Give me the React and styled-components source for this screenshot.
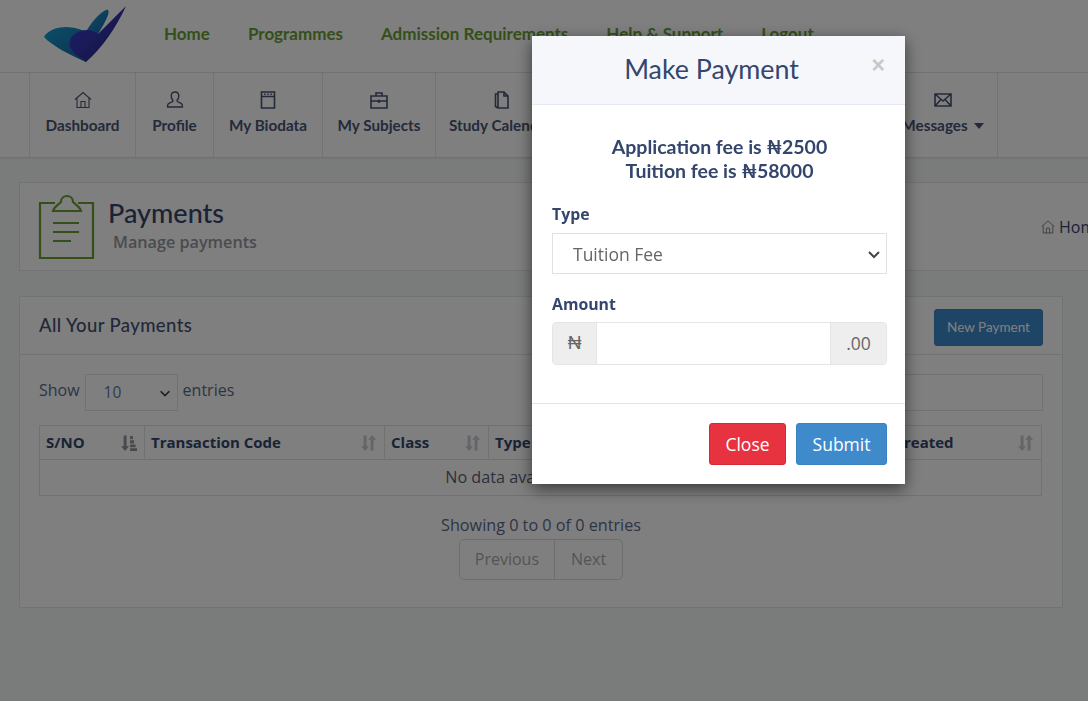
import styled, { createGlobalStyle } from "styled-components"

const heading = `"Lato", "Liberation Sans", sans-serif`
const bodyFont = `"Open Sans", "Noto Sans", "DejaVu Sans", sans-serif`

const GlobalStyle = createGlobalStyle`
  html, body {
    margin: 0;
    height: 100%;
    overflow: hidden;
  }
  body {
    background: #f4f9f7;
    font-family: ${bodyFont};
    font-size: 16px;
    color: #34466d;
  }
  * { box-sizing: border-box; }
`

const TopBar = styled.header`
  display: flex;
  align-items: center;
  height: 73px;
  padding: 0 0 5px 43px;
  background: #fff;
  border-bottom: 1px solid #e6e6ee;
`
const Logo = styled.svg`
  width: 85px;
  height: 58px;
  margin-right: 36px;
  flex-shrink: 0;
`
const TopLinks = styled.nav`
  display: flex;
  gap: 38px;
  white-space: nowrap;
`
const TopLink = styled.a`
  font-family: ${heading};
  font-weight: 700;
  font-size: 17px;
  color: #6a9e36;
`
const MenuBar = styled.nav`
  display: flex;
  height: 84px;
  padding-left: 29px;
  background: #fff;
  box-shadow: 0 1px 2px rgba(0, 0, 0, 0.12);
`
const MenuItem = styled.a`
  display: flex;
  flex-direction: column;
  align-items: center;
  flex: 0 0 ${p => p.$width}px;
  padding-top: 17px;
  border-left: 1px solid #e6e6ee;
  border-right: ${p => (p.$last ? "1px solid #e6e6ee" : "0")};
  font-family: ${heading};
  font-weight: 700;
  font-size: 15.3px;
  color: #4a5474;
  white-space: nowrap;

  svg {
    width: 20px;
    height: 20px;
    margin-bottom: 6px;
  }
`
const Caret = styled.span`
  display: inline-block;
  margin-left: 6px;
  vertical-align: 2px;
  border-left: 5.5px solid transparent;
  border-right: 5.5px solid transparent;
  border-top: 6px solid #4a5474;
`
const Content = styled.main`
  padding: 25px 25px 0 19px;
`
const TitleCard = styled.section`
  display: flex;
  align-items: flex-start;
  width: 1200px;
  height: 89px;
  padding: 11px 0 0 18px;
  background: #fff;
  border: 1px solid #e6e6ee;
`
const TitleIcon = styled.svg`
  width: 58px;
  height: 66px;
  flex-shrink: 0;
  margin-right: 12px;
`
const TitleText = styled.div`
  padding-top: 2px;
`
const PageTitle = styled.h1`
  margin: 0;
  font-family: ${heading};
  font-weight: 500;
  font-size: 27px;
  line-height: 34px;
  color: #34466d;
`
const PageSub = styled.p`
  margin: 2px 0 0 5px;
  font-weight: 600;
  font-size: 16.2px;
  line-height: 21px;
  color: #94979f;
`
const Crumb = styled.div`
  display: flex;
  align-items: center;
  gap: 3px;
  width: 178px;
  margin-left: auto;
  margin-top: 22px;
  color: #34466d;
  font-size: 16px;
  white-space: nowrap;

  svg {
    width: 16px;
    height: 16px;
    flex-shrink: 0;
    color: #777;
  }
`
const Card = styled.section`
  height: 312px;
  margin-top: 25px;
  background: #fff;
  border: 1px solid #e6e6ee;
`
const CardHead = styled.div`
  display: flex;
  align-items: flex-start;
  justify-content: space-between;
  height: 58px;
  padding: 12px 19px 0;
  border-bottom: 1px solid #e6e6ee;
`
const CardTitle = styled.h2`
  margin: 0;
  font-family: ${heading};
  font-weight: 500;
  font-size: 18.5px;
  line-height: 32px;
  letter-spacing: 0.4px;
  color: #45506f;
`
const PrimaryButton = styled.button`
  width: 109px;
  height: 37px;
  padding: 0 0 2px;
  border: 1px solid #3a82c0;
  border-radius: 3px;
  background: #3e8acc;
  color: #fff;
  font-family: ${heading};
  font-size: 13.5px;
`
const CardBody = styled.div`
  padding: 19px 19px 0 19px;
`
const ControlRow = styled.div`
  display: flex;
  align-items: flex-start;
  justify-content: space-between;
  height: 37px;
`
const LengthControl = styled.label`
  display: flex;
  align-items: flex-start;
  gap: 5px;
  line-height: 33px;
  color: #5a6a8a;
`
const PageSelect = styled.div`
  display: flex;
  align-items: center;
  justify-content: space-between;
  width: 93px;
  height: 37px;
  padding: 0 5px 0 18px;
  border: 1px solid #e2e2e2;
  font-size: 15.5px;
  color: #5d7ba0;

  svg {
    width: 14px;
    height: 14px;
    color: #444;
  }
`
const SearchBox = styled.div`
  width: 300px;
  height: 37px;
  border: 1px solid #e2e2e2;
`
const DataTable = styled.table`
  width: 1002px;
  margin-top: 14px;
  border-collapse: collapse;
  table-layout: fixed;
`
const HeadCell = styled.th`
  position: relative;
  width: ${p => p.$width}px;
  height: 34px;
  padding: 0 6px 2px;
  border: 1px solid #e2e2e2;
  text-align: left;
  font-size: 15px;
  font-weight: 700;
  color: #34466d;
  white-space: nowrap;
  overflow: hidden;

  svg {
    position: absolute;
    right: 7px;
    top: 8px;
    width: 17px;
    height: 18px;
    color: ${p => (p.$active ? "#8f949c" : "#c9cbd0")};
  }
`
const EmptyCell = styled.td`
  height: 36px;
  padding-bottom: 2px;
  border: 1px solid #e2e2e2;
  text-align: center;
  font-size: 16.2px;
  color: #5a5f78;
`
const Footer = styled.div`
  display: flex;
  flex-direction: column;
  align-items: center;
  margin-top: 18px;
  font-size: 16.2px;
  color: #5a6a8a;
  line-height: 22px;
`
const Pager = styled.div`
  display: flex;
  height: 41px;
  margin-top: 3px;
  border: 1px solid #dcdcdc;
  border-radius: 5px;
  font-size: 16px;
`
const PagerLink = styled.span`
  display: flex;
  align-items: center;
  padding: 0 ${p => p.$pad}px 2px;
  border-left: ${p => (p.$divided ? "1px solid #dcdcdc" : "0")};
  color: #a9a9a9;
`
const Overlay = styled.div`
  position: fixed;
  inset: 0;
  background: rgba(0, 0, 0, 0.5);
`
const Modal = styled.div`
  position: absolute;
  left: 532px;
  top: 36px;
  width: 373px;
  height: 448px;
  background: #fff;
  box-shadow: 0 5px 15px rgba(0, 0, 0, 0.55);
`
const ModalHead = styled.div`
  position: relative;
  height: 69px;
  padding: 14px 14px 0 0;
  background: #f5f7fa;
  border-bottom: 1px solid #e6e8f2;
  text-align: center;
`
const ModalTitle = styled.h3`
  margin: 0;
  font-family: ${heading};
  font-weight: 400;
  font-size: 26.8px;
  line-height: 38px;
  color: #34466d;
`
const CloseX = styled.span`
  position: absolute;
  right: 20px;
  top: 15px;
  font-family: "Liberation Sans", sans-serif;
  font-weight: 700;
  font-size: 23px;
  line-height: 28px;
  color: #c8c8c8;
`
const ModalBody = styled.div`
  height: 299px;
  padding: 30px 18px 0 20px;
  border-bottom: 1px solid #e5e5e5;
`
const FeeText = styled.p`
  margin: 0 0 21px;
  text-align: center;
  font-family: ${heading};
  font-weight: 700;
  font-size: 19.5px;
  line-height: 24px;
  color: #34466d;
`
const FieldLabel = styled.label`
  display: block;
  margin-bottom: ${p => p.$gap}px;
  font-weight: 700;
  font-size: 15.8px;
  line-height: 21px;
  color: #34466d;
`
const TypeSelect = styled.div`
  display: flex;
  align-items: center;
  justify-content: space-between;
  height: 41px;
  margin-bottom: 20px;
  padding: 0 4px 0 20px;
  border: 1px solid #e2e2e2;
  font-size: 17.5px;
  color: #666;

  svg {
    width: 16px;
    height: 16px;
    color: #444;
  }
`
const InputGroup = styled.div`
  display: flex;
  height: 43px;
  border: 1px solid #e5e5e5;
  border-radius: 4px;
  overflow: hidden;
`
const Addon = styled.span`
  display: flex;
  align-items: center;
  justify-content: center;
  flex: 0 0 ${p => p.$width}px;
  padding-bottom: 2px;
  background: #eee;
  color: #666;
  font-family: ${p => (p.$symbol ? `"Liberation Sans", "DejaVu Sans", sans-serif` : bodyFont)};
  font-size: ${p => (p.$symbol ? "19px" : "17.5px")};
`
const AmountInput = styled.input`
  flex: 1;
  min-width: 0;
  border: 0;
  border-left: 1px solid #e5e5e5;
  border-right: 1px solid #e5e5e5;
  outline: 0;
`
const ModalFoot = styled.div`
  display: flex;
  justify-content: flex-end;
  gap: 10px;
  padding: 19px 18px 0 0;
`
const ModalButton = styled.button`
  width: ${p => p.$width}px;
  height: 42px;
  padding: 0;
  border: 1px solid ${p => p.$edge};
  border-radius: 3px;
  background: ${p => p.$fill};
  color: #fff;
  font-family: ${bodyFont};
  font-size: 17.5px;
`

const Sort = () => (
  <svg viewBox="0 0 16 16" fill="currentColor">
    <path d="M3.400 1h2.800v10h2.300L4.800 15.500 1 11h2.400zM10 15h2.800V5h2.400L11.400.5 7.700 5H10z" />
  </svg>
)
const SortActive = () => (
  <svg viewBox="0 0 16 16" fill="currentColor">
    <path d="M3.400 1h2.800v10h2.300L4.800 15.500 1 11h2.400zM9.500 1.500h2.600v3H9.500zM9.500 5.500h3.600v3H9.500zM9.500 9.500h5.200v2.500H9.500zM9.500 13h6.500v2.500H9.500z" />
  </svg>
)
const Chevron = () => (
  <svg viewBox="0 0 16 16" fill="none" stroke="currentColor" strokeWidth="2">
    <path d="M3 6l5 5 5-5" />
  </svg>
)
const HomeIcon = () => (
  <svg viewBox="0 0 20 20" fill="none" stroke="currentColor" strokeWidth="1.1">
    <path d="M2 9.500L10 2.500l8 7M4 8.500v9h12v-9M8 17.500v-6h4v6" />
  </svg>
)

const menu = [
  { label: "Dashboard", width: 106, icon: <HomeIcon /> },
  {
    label: "Profile",
    width: 78,
    icon: (
      <svg viewBox="0 0 20 20" fill="none" stroke="currentColor" strokeWidth="1.4">
        <path d="M10 2c-2.400 0-3.800 1.800-3.800 4 0 2 .9 3.400 1.800 4.400 0 1-.6 1.500-2 2-1.800.6-3.400 1.300-3.400 3.200v1.400h14.800v-1.400c0-1.900-1.600-2.600-3.400-3.200-1.400-.5-2-1-2-2 .9-1 1.800-2.400 1.800-4.400 0-2.200-1.400-4-3.800-4z" />
      </svg>
    ),
  },
  {
    label: "My Biodata",
    width: 109,
    icon: (
      <svg viewBox="0 0 20 20" fill="none" stroke="currentColor" strokeWidth="1.6">
        <path d="M3.500 2h13v16h-13zM3.500 6.500h13" />
        <path d="M6 4.200h1.500M9.200 4.200h1.500M12.400 4.200h1.500" strokeWidth="1.400" />
      </svg>
    ),
  },
  {
    label: "My Subjects",
    width: 113,
    icon: (
      <svg viewBox="0 0 20 20" fill="none" stroke="currentColor" strokeWidth="1.6">
        <path d="M2 6h16v12H2zM7 6V3h6v3M2 11h16" />
        <path d="M9 10h2v2.500H9z" fill="currentColor" strokeWidth="0.5" />
      </svg>
    ),
  },
  {
    label: "Study Calendar",
    width: 130,
    icon: (
      <svg viewBox="0 0 20 20" fill="none" stroke="currentColor" strokeWidth="1.6">
        <path d="M7 2h6l4 4v12H7zM7 4H4.500v12.500L7 18M13 2v4h4" />
      </svg>
    ),
  },
  { label: "Payments", width: 150, icon: <HomeIcon /> },
  { label: "Results", width: 172 },
  {
    label: "Messages",
    width: 111,
    last: true,
    caret: true,
    icon: (
      <svg viewBox="0 0 20 20" fill="none" stroke="currentColor" strokeWidth="1.6">
        <path d="M2 4h16v12H2zM2 4l8 7 8-7M2 16l6-6.500M18 16l-6-6.500" />
      </svg>
    ),
  },
]

const columns = [
  { label: "S/NO", width: 105, active: true },
  { label: "Transaction Code", width: 240 },
  { label: "Class", width: 104 },
  { label: "Type", width: 120 },
  { label: "", width: 120 },
  { label: "", width: 120 },
  { label: "Date Created", width: 193 },
]

export default function App() {
  return (
    <>
      <GlobalStyle />
      <TopBar>
        <Logo viewBox="43 5 85 58">
          <defs>
            <linearGradient id="wing" x1="0" y1="0" x2="1" y2="1">
              <stop offset="0" stopColor="#1a9fd0" />
              <stop offset="1" stopColor="#1560a0" />
            </linearGradient>
            <linearGradient id="heart" x1="0" y1="0" x2="1" y2="1">
              <stop offset="0" stopColor="#3e40e0" />
              <stop offset="1" stopColor="#28287a" />
            </linearGradient>
          </defs>
          <path d="M44 37C47 31 56 27 66 27C74 27 82 30 88 32L86 62C72 56 52 46 44 37z" fill="url(#wing)" />
          <path d="M86 32C90 24 100 12 106 10C109 9 109 12 108 15C106 21 102 27 98 34z" fill="url(#wing)" />
          <path d="M86 62C78 56 68 50 69.500 42C71 34 80 30 87 30C92 30 96 32 98 34L126 6C116 28 102 48 86 62z" fill="url(#heart)" />
        </Logo>
        <TopLinks>
          <TopLink>Home</TopLink>
          <TopLink>Programmes</TopLink>
          <TopLink>Admission Requirements</TopLink>
          <TopLink>Help &amp; Support</TopLink>
          <TopLink>Logout</TopLink>
        </TopLinks>
      </TopBar>
      <MenuBar>
        {menu.map(item => (
          <MenuItem key={item.label} $width={item.width} $last={item.last}>
            {item.icon}
            <span>
              {item.label}
              {item.caret && <Caret />}
            </span>
          </MenuItem>
        ))}
      </MenuBar>
      <Content>
        <TitleCard>
          <TitleIcon viewBox="0 0 58 66" fill="none" stroke="#6a9e36" strokeWidth="2.200">
            <path d="M17 9H2v55h53V9H40" />
            <path d="M15 17c1-4 5-6 8-9 0-4 3-6 6-6s6 2 6 6c3 3 7 5 8 9z" />
            <path d="M15 29h26M15 38h26M15 47h18" />
          </TitleIcon>
          <TitleText>
            <PageTitle>Payments</PageTitle>
            <PageSub>Manage payments</PageSub>
          </TitleText>
          <Crumb>
            <HomeIcon />
            Home / Payments
          </Crumb>
        </TitleCard>
        <Card>
          <CardHead>
            <CardTitle>All Your Payments</CardTitle>
            <PrimaryButton>New Payment</PrimaryButton>
          </CardHead>
          <CardBody>
            <ControlRow>
              <LengthControl>
                Show
                <PageSelect>
                  10
                  <Chevron />
                </PageSelect>
                entries
              </LengthControl>
              <SearchBox />
            </ControlRow>
            <DataTable>
              <thead>
                <tr>
                  {columns.map((col, i) => (
                    <HeadCell key={i} $width={col.width} $active={col.active}>
                      {col.label}
                      {col.active ? <SortActive /> : <Sort />}
                    </HeadCell>
                  ))}
                </tr>
              </thead>
              <tbody>
                <tr>
                  <EmptyCell colSpan={7}>No data available in table</EmptyCell>
                </tr>
              </tbody>
            </DataTable>
            <Footer>
              Showing 0 to 0 of 0 entries
              <Pager>
                <PagerLink $pad={15}>Previous</PagerLink>
                <PagerLink $pad={16} $divided>Next</PagerLink>
              </Pager>
            </Footer>
          </CardBody>
        </Card>
      </Content>
      <Overlay>
        <Modal>
          <ModalHead>
            <ModalTitle>Make Payment</ModalTitle>
            <CloseX>×</CloseX>
          </ModalHead>
          <ModalBody>
            <FeeText>
              Application fee is ₦2500
              <br />
              Tuition fee is ₦58000
            </FeeText>
            <FieldLabel $gap={8}>Type</FieldLabel>
            <TypeSelect>
              Tuition Fee
              <Chevron />
            </TypeSelect>
            <FieldLabel $gap={7}>Amount</FieldLabel>
            <InputGroup>
              <Addon $width={43} $symbol>₦</Addon>
              <AmountInput />
              <Addon $width={55}>.00</Addon>
            </InputGroup>
          </ModalBody>
          <ModalFoot>
            <ModalButton $width={77} $fill="#e7323f" $edge="#d42a36">Close</ModalButton>
            <ModalButton $width={91} $fill="#3f8acb" $edge="#3a82c0">Submit</ModalButton>
          </ModalFoot>
        </Modal>
      </Overlay>
    </>
  )
}
